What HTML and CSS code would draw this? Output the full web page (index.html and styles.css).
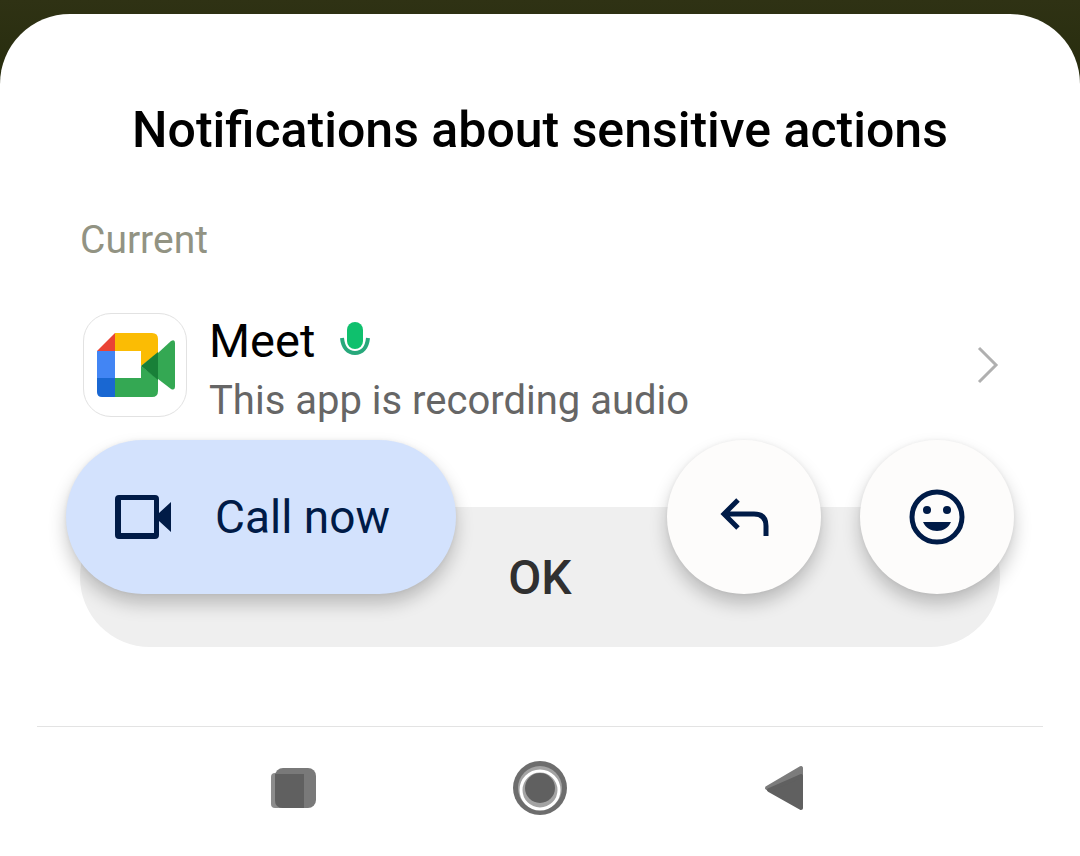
FILE: index.html
```html
<!DOCTYPE html>
<html lang="en">
<head>
<meta charset="utf-8">
<meta name="viewport" content="width=device-width, initial-scale=1">
<title>Notifications about sensitive actions</title>
<link rel="stylesheet" href="styles.css">
</head>
<body>
<main class="sheet">
  <section class="content">
    <h1 class="title">Notifications about sensitive actions</h1>
    <h2 class="section-label">Current</h2>
    <a class="app-row" href="#meet">
      <span class="app-icon">
        <svg width="80" height="66" viewBox="0 0 80 66" aria-hidden="true">
          <path fill="#ea4335" d="M20 1v18H2z"/>
          <path fill="#fbbc04" d="M20 1h37q6 0 6 6v14L46 34V19H20z"/>
          <path fill="#4285f4" d="M2 19h18v28H2z"/>
          <path fill="#1967d2" d="M2 46h18v19H7q-5 0-5-5z"/>
          <path fill="#34a853" d="M20 46h26V34l17 13v12q0 6-6 6H20z"/>
          <path fill="#34a853" d="M63 21 76 9q4-2 4 2v43q0 5-4 3L63 47z"/>
          <path fill="#188038" d="M46 34 63 20v28z"/>
        </svg>
      </span>
      <span class="app-text">
        <span class="app-name">Meet
          <svg width="30" height="38" viewBox="0 0 30 38" role="img" aria-label="Microphone in use">
            <rect x="7" y="0" width="16" height="27" rx="8" fill="#0fc06d"/>
            <path d="M2 16C3 26 8 31 15 31S27 26 28 16" fill="none" stroke="#27a87b" stroke-width="4"/>
          </svg>
        </span>
        <span class="app-status">This app is recording audio</span>
      </span>
      <svg class="chevron" width="24" height="104" viewBox="0 0 24 104" aria-hidden="true">
        <path d="M3 35 20 52 3 69" fill="none" stroke="#b0b0b0" stroke-width="3"/>
      </svg>
    </a>
    <div class="footer">
      <button class="ok" type="button">OK</button>
      <div class="floating-actions">
        <button class="fab call" type="button">
          <svg width="56" height="46" viewBox="0 0 56 46" aria-hidden="true">
            <path fill="#001b47" fill-rule="evenodd" d="M4 1h36q4 0 4 4v14L56 8v30L44 27v14q0 4-4 4H4q-4 0-4-4V5q0-4 4-4zM6 6v33h33V6z"/>
          </svg>
          Call now
        </button>
        <button class="fab round" type="button" aria-label="Reply">
          <svg width="50" height="40" viewBox="0 0 50 40" fill="none" stroke="#001b47" stroke-width="5" aria-hidden="true">
            <path d="M19 3 5 17l14 14M5 17h30q12 0 12 12v10"/>
          </svg>
        </button>
        <button class="fab round" type="button" aria-label="Add reaction">
          <svg width="56" height="56" viewBox="0 0 56 56" fill="#001b47" aria-hidden="true">
            <circle cx="28" cy="28" r="25" fill="none" stroke="#001b47" stroke-width="5"/>
            <circle cx="18" cy="21" r="4"/>
            <circle cx="38" cy="21" r="4"/>
            <path d="M14 33h28C37 45 19 45 14 33z"/>
          </svg>
        </button>
      </div>
    </div>
  </section>
  <nav class="nav" aria-label="System navigation">
    <button class="nav-button" type="button" aria-label="Recent apps">
      <svg width="56" height="56" viewBox="0 0 56 56" aria-hidden="true">
        <rect x="5" y="13" width="33" height="35" rx="4" fill="#8c8c8c"/>
        <rect x="9" y="8" width="41" height="40" rx="8" fill="#797979"/>
        <path d="M9 14h29v34H17q-8 0-8-8z" fill="#606060"/>
      </svg>
    </button>
    <button class="nav-button" type="button" aria-label="Home">
      <svg width="56" height="56" viewBox="0 0 56 56" aria-hidden="true">
        <circle cx="28" cy="28" r="27" fill="#6d6d6d"/>
        <circle cx="28" cy="28" r="22" fill="#a3a3a3"/>
        <circle cx="28" cy="30" r="19" fill="#a3a3a3" stroke="#fff" stroke-width="3"/>
        <circle cx="28" cy="28" r="15" fill="#606060"/>
      </svg>
    </button>
    <button class="nav-button" type="button" aria-label="Back">
      <svg width="56" height="56" viewBox="0 0 56 56" stroke-linejoin="round" stroke-width="4" aria-hidden="true">
        <path d="M9 28 43 8v39z" fill="#7c7c7c" stroke="#7c7c7c"/>
        <path d="M11 30 43 16v32z" fill="#606060" stroke="#606060"/>
      </svg>
    </button>
  </nav>
</main>
</body>
</html>
```
FILE: styles.css
```css
* {
  box-sizing: border-box;
}

body {
  margin: 0;
  min-height: 100vh;
  padding-top: 14px;
  display: flex;
  background: linear-gradient(#2f3214, #252b0c 100px);
  font-family: Roboto, "Liberation Sans", sans-serif;
}

button {
  border: 0;
  padding: 0;
  font-family: inherit;
  cursor: pointer;
}

svg {
  display: block;
  flex: none;
}

.sheet {
  flex: 1;
  display: flex;
  flex-direction: column;
  background: #fff;
  border-radius: 70px 70px 0 0;
}

.content {
  padding: 86px 80px 79px;
}

.title {
  margin: 0;
  font-size: 50px;
  line-height: 60px;
  font-weight: 500;
  text-align: center;
  color: #000;
}

.section-label {
  margin: 56px 0 49px;
  font-size: 39px;
  line-height: 48px;
  font-weight: 400;
  color: #929383;
}

.app-row {
  display: flex;
  align-items: flex-start;
  color: #000;
  text-decoration: none;
}

.app-icon {
  display: flex;
  align-items: center;
  justify-content: center;
  width: 104px;
  height: 104px;
  margin: 0 22px 0 3px;
  border: 1px solid #e2e2e2;
  border-radius: 28px;
}

.app-text {
  flex: 1;
}

.app-name {
  display: flex;
  align-items: center;
  gap: 25px;
  font-size: 47px;
  line-height: 56px;
}

.app-status {
  display: block;
  font-size: 40px;
  line-height: 64px;
  color: #666;
}

.footer {
  position: relative;
  margin-top: 74px;
}

.ok {
  display: block;
  width: 100%;
  height: 140px;
  border-radius: 70px;
  background: #efefef;
  color: #303030;
  font-size: 48px;
  font-weight: 500;
}

.floating-actions {
  position: absolute;
  top: -67px;
  left: -14px;
  right: -14px;
  display: flex;
  gap: 39px;
}

.fab {
  display: flex;
  align-items: center;
  justify-content: center;
  height: 154px;
  border-radius: 77px;
  box-shadow: 0 10px 18px rgba(0, 0, 0, 0.22), 0 0 4px rgba(0, 0, 0, 0.06);
  color: #001b47;
}

.call {
  gap: 44px;
  width: 390px;
  margin-right: auto;
  padding-right: 17px;
  background: #d3e2fd;
  font-size: 46px;
}

.round {
  width: 154px;
  background: #fdfcfb;
}

.nav {
  flex: 1;
  display: flex;
  align-items: center;
  justify-content: center;
  gap: 190px;
  margin: 0 37px;
  padding-bottom: 8px;
  border-top: 1px solid #e3e3e3;
}

.nav-button {
  background: none;
}
```
